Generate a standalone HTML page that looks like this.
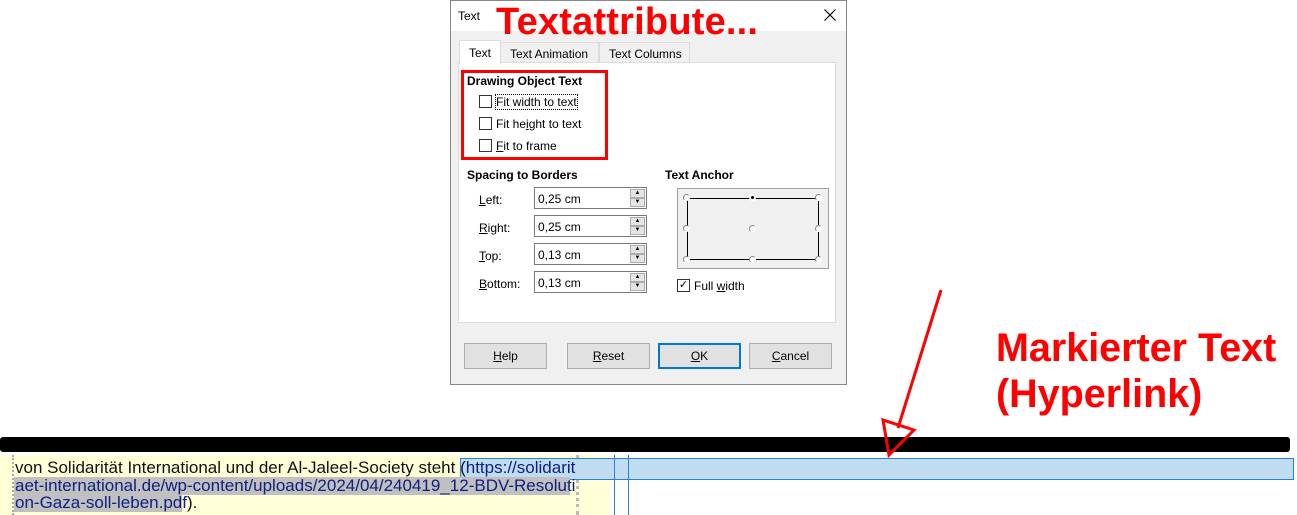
<!DOCTYPE html>
<html><head><meta charset="utf-8"><style>
*{margin:0;padding:0;box-sizing:border-box}
body{width:1297px;height:515px;background:#fff;position:relative;overflow:hidden;font-family:"Liberation Sans",sans-serif;font-size:12px;color:#000}
.a{position:absolute}
.u{text-decoration:underline}
.cb{position:absolute;width:13px;height:13px;border:1px solid #333;background:#fff}
.inp{position:absolute;width:113px;height:22px;border:1px solid #7a7a7a;background:#fff;padding:4px 0 0 3px}
.sp{position:absolute;right:1px;top:1px;width:15px;height:18px}
.sp div{height:9px;border:1px solid #adadad;background:#e5e5e5;font-size:6px;line-height:7px;text-align:center}
.btn{position:absolute;top:343px;width:83px;height:26px;border:1px solid #adadad;background:#e1e1e1;text-align:center;line-height:24px}
.dot{position:absolute;width:7px;height:7px;border-radius:50%;background:#fff;border:1px solid #888;border-right-color:#fff;border-bottom-color:#fff}
.red{color:#f00;font-weight:bold;font-family:"Liberation Sans",sans-serif}
</style></head><body>
<div class="a" style="left:450px;top:0;width:397px;height:385px;border:1px solid #888;background:#f0f0f0"></div>
<div class="a" style="left:451px;top:1px;width:395px;height:30px;background:#fff"></div>
<div class="a" style="left:458px;top:9px">Text</div>
<svg class="a" style="left:824px;top:9px" width="12" height="12"><path d="M0.5 0.5L11.5 11.5M11.5 0.5L0.5 11.5" stroke="#000" stroke-width="1.2"/></svg>
<div class="a" style="left:458px;top:62px;width:378px;height:261px;background:#fff;border:1px solid #dcdcdc"></div>
<div class="a" style="left:459px;top:40px;width:42px;height:24px;background:#fff;border:1px solid #dcdcdc;border-bottom:none;padding:5px 0 0 9px">Text</div>
<div class="a" style="left:500px;top:42px;width:99px;height:21px;background:#f0f0f0;border:1px solid #dcdcdc;padding:4px 0 0 9px">Text Animation</div>
<div class="a" style="left:599px;top:42px;width:91px;height:21px;background:#f0f0f0;border:1px solid #dcdcdc;padding:4px 0 0 9px">Text Columns</div>
<div class="a" style="left:467px;top:74px;font-weight:bold">Drawing Object Text</div>
<div class="cb" style="left:479px;top:95px"></div><div class="a" style="left:496px;top:95px;outline:1px dotted #000">Fit width to text</div>
<div class="cb" style="left:479px;top:117px"></div><div class="a" style="left:496px;top:117px">Fit he<span class="u">i</span>ght to text</div>
<div class="cb" style="left:479px;top:139px"></div><div class="a" style="left:496px;top:139px"><span class="u">F</span>it to frame</div>
<div class="a" style="left:461px;top:70px;width:147px;height:90px;border:3px solid #f00"></div>
<div class="a" style="left:467px;top:168px;font-weight:bold">Spacing to Borders</div>
<div class="a" style="left:479px;top:193px"><span class="u">L</span>eft:</div>
<div class="a" style="left:479px;top:221px"><span class="u">R</span>ight:</div>
<div class="a" style="left:479px;top:249px"><span class="u">T</span>op:</div>
<div class="a" style="left:479px;top:277px"><span class="u">B</span>ottom:</div>
<div class="inp" style="left:534px;top:187px">0,25 cm<div class="sp"><div>▲</div><div>▼</div></div></div>
<div class="inp" style="left:534px;top:215px">0,25 cm<div class="sp"><div>▲</div><div>▼</div></div></div>
<div class="inp" style="left:534px;top:243px">0,13 cm<div class="sp"><div>▲</div><div>▼</div></div></div>
<div class="inp" style="left:534px;top:271px">0,13 cm<div class="sp"><div>▲</div><div>▼</div></div></div>
<div class="a" style="left:665px;top:168px;font-weight:bold">Text Anchor</div>
<div class="a" style="left:677px;top:188px;width:152px;height:81px;background:#f0f0f0;border:1px solid #a0a0a0"></div>
<div class="a" style="left:687px;top:198px;width:132px;height:62px;border:1px solid #000"></div>
<div class="dot" style="left:683px;top:194px"></div><div class="dot" style="left:749px;top:194px;background:#000;border:2px solid #fff"></div><div class="dot" style="left:815px;top:194px"></div>
<div class="dot" style="left:683px;top:225px"></div><div class="dot" style="left:749px;top:225px"></div><div class="dot" style="left:815px;top:225px"></div>
<div class="dot" style="left:683px;top:256px"></div><div class="dot" style="left:749px;top:256px"></div><div class="dot" style="left:815px;top:256px"></div>
<div class="cb" style="left:677px;top:279px;font-size:11px;line-height:11px;text-align:center">✓</div>
<div class="a" style="left:694px;top:279px">Full <span class="u">w</span>idth</div>
<div class="btn" style="left:464px"><span class="u">H</span>elp</div>
<div class="btn" style="left:567px"><span class="u">R</span>eset</div>
<div class="btn" style="left:658px;border:2px solid #0078d7;line-height:22px"><span class="u">O</span>K</div>
<div class="btn" style="left:749px"><span class="u">C</span>ancel</div>
<div class="a red" style="left:496px;top:1px;font-size:38px;letter-spacing:0.2px">Textattribute...</div>
<div class="a red" style="left:996px;top:325px;font-size:39.5px;line-height:46px">Markierter Text<br>(Hyperlink)</div>
<div class="a" style="left:0;top:455px;width:610px;height:60px;background:#ffffd8"></div>
<div class="a" style="left:12px;top:455px;width:2px;height:60px;border-left:2px dotted #aaa"></div>
<div class="a" style="left:576px;top:455px;width:4px;height:60px;border-left:3px dotted #bbb"></div>
<div class="a" style="left:0;top:437px;width:1290px;height:15px;background:#000;border-radius:3px"></div>
<div class="a" style="left:460px;top:458px;width:834px;height:22px;background:#c0dcf0;border:1px solid #2a7fd0"></div>
<div class="a" style="left:614px;top:455px;width:1px;height:60px;background:#2a7fd0"></div>
<div class="a" style="left:628px;top:455px;width:1px;height:60px;background:#2a7fd0"></div>
<div class="a" style="left:14px;top:477px;width:556px;height:18px;background:#c0c0c0"></div>
<div class="a" style="left:14px;top:495px;width:168px;height:17px;background:#c0c0c0"></div>
<div class="a" style="left:15px;top:459px;font-size:17px;line-height:17.5px;letter-spacing:0;color:#111;white-space:nowrap">von Solidarität International und der Al-Jaleel-Society steht (<span style="color:#102080">https://solidarit</span><br><span style="color:#102080">aet-international.de/wp-content/uploads/2024/04/240419_12-BDV-Resoluti</span><br><span style="color:#102080">on-Gaza-soll-leben.pdf</span>).</div>
<svg class="a" style="left:0;top:0" width="1297" height="515"><line x1="941" y1="290" x2="898" y2="428" stroke="#f00" stroke-width="3"/><polygon points="883,420 914,430 889,455" fill="none" stroke="#f00" stroke-width="3"/></svg>
</body></html>
